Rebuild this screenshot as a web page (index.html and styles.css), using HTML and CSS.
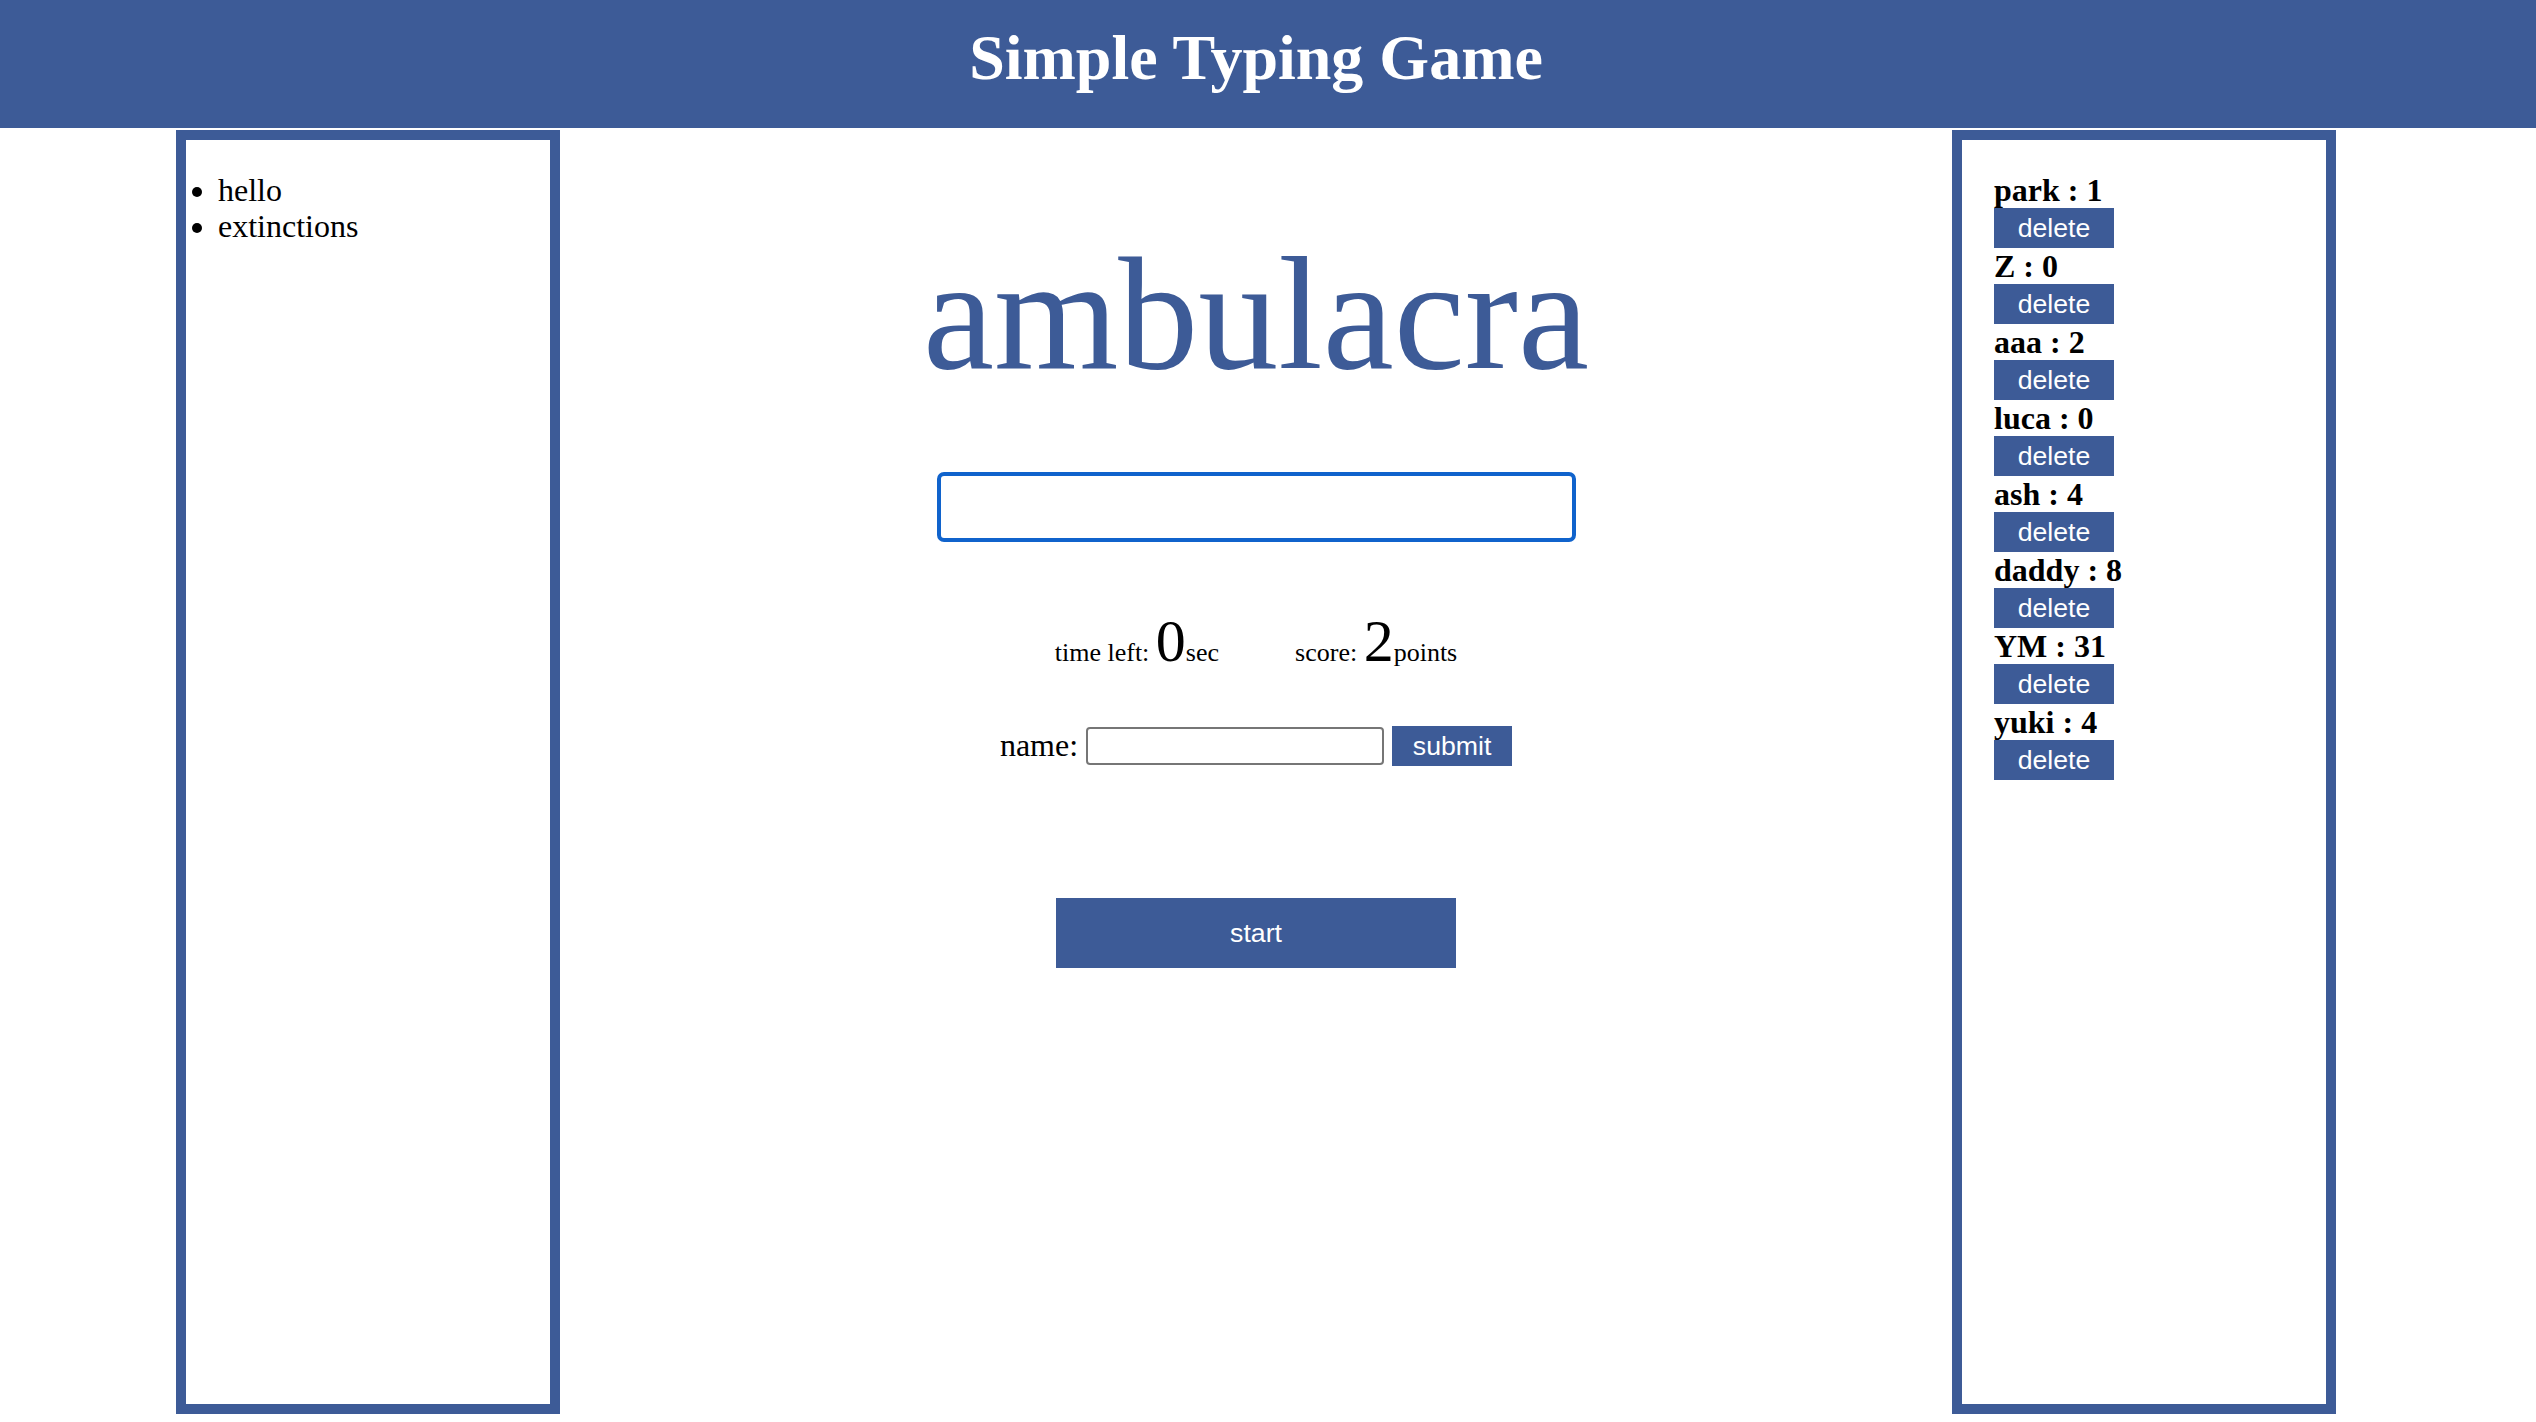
FILE: index.html
```html
<!DOCTYPE html>
<html lang="en">
<head>
<meta charset="utf-8">
<title>Simple Typing Game</title>
<link rel="stylesheet" href="styles.css">
</head>
<body>
<header class="header">
  <h1 class="title">Simple Typing Game</h1>
</header>
<div class="main">
  <aside class="box">
    <ul class="words">
      <li>hello</li>
      <li>extinctions</li>
    </ul>
  </aside>
  <section class="game">
    <div class="word">ambulacra</div>
    <input class="typing" type="text" aria-label="type the word">
    <div class="stats"><span class="stat">time left: <span class="big">0</span>sec</span><span class="stat">score: <span class="big">2</span>points</span></div>
    <div class="name-row">
      <label class="name-label" for="name">name:</label>
      <input class="name-input" id="name" type="text">
      <button class="btn submit">submit</button>
    </div>
    <button class="btn start">start</button>
  </section>
  <aside class="box">
    <ul class="scores">
      <li><div class="entry">park : 1</div><button class="btn del">delete</button></li>
      <li><div class="entry">Z : 0</div><button class="btn del">delete</button></li>
      <li><div class="entry">aaa : 2</div><button class="btn del">delete</button></li>
      <li><div class="entry">luca : 0</div><button class="btn del">delete</button></li>
      <li><div class="entry">ash : 4</div><button class="btn del">delete</button></li>
      <li><div class="entry">daddy : 8</div><button class="btn del">delete</button></li>
      <li><div class="entry">YM : 31</div><button class="btn del">delete</button></li>
      <li><div class="entry">yuki : 4</div><button class="btn del">delete</button></li>
    </ul>
  </aside>
</div>
</body>
</html>
```
FILE: styles.css
```css
html, body {
  margin: 0;
  padding: 0;
  background: #ffffff;
}
body {
  font-family: "Liberation Serif", "Times New Roman", serif;
  color: #000;
  overflow: hidden;
}
.header {
  width: 100%;
  height: 128px;
  box-sizing: border-box;
  padding-top: 21px;
  background: #3d5b97;
  text-align: center;
}
.title {
  margin: 0;
  font-size: 64px;
  line-height: 74px;
  font-weight: bold;
  color: #ffffff;
  padding-right: 24px;
}
.main {
  display: flex;
  justify-content: space-between;
  align-items: flex-start;
  width: 2512px;
  box-sizing: border-box;
  padding: 0 176px;
  margin-top: 2px;
}
.box {
  width: 384px;
  height: 1284px;
  box-sizing: border-box;
  border: 10px solid #3d5b97;
  flex: none;
}
.words {
  margin: 32px 0 0 0;
  padding-left: 32px;
  font-size: 32px;
  line-height: 36px;
}
.scores {
  list-style: none;
  margin: 32px 0 0 0;
  padding-left: 32px;
  font-size: 32px;
  line-height: 36px;
}
.entry {
  font-weight: bold;
  height: 36px;
}
.btn {
  font-family: "Liberation Sans", Arial, Helvetica, sans-serif;
  font-size: 26.67px;
  color: #ffffff;
  background: #3d5b97;
  border: none;
  border-radius: 0;
  padding: 0;
  margin: 0;
  display: block;
}
.del {
  width: 120px;
  height: 40px;
  line-height: 40px;
}
.game {
  flex: 1;
  display: flex;
  flex-direction: column;
  align-items: center;
  padding-top: 92px;
}
.word {
  font-size: 160px;
  line-height: 184px;
  color: #3d5b97;
  white-space: nowrap;
}
.typing {
  margin: 66px 0 0 0;
  width: 639px;
  height: 70px;
  box-sizing: border-box;
  border: 4px solid #1063cc;
  border-radius: 7px;
  outline: none;
  padding: 0 8px;
  font-size: 26px;
  background: #fff;
}
.stats {
  margin-top: 65px;
  font-size: 26px;
  white-space: nowrap;
}
.stat {
  margin: 0 38px;
}
.big {
  font-size: 60px;
}
.name-row {
  margin-top: 50px;
  display: flex;
  align-items: center;
  gap: 8px;
  height: 40px;
}
.name-label {
  font-size: 32px;
  line-height: 36px;
  position: relative;
  top: -1px;
}
.name-input {
  width: 298px;
  height: 38px;
  box-sizing: border-box;
  border: 2px solid #767676;
  border-radius: 4px;
  padding: 2px 4px;
  margin: 0;
  font-size: 26px;
  background: #fff;
}
.submit {
  width: 120px;
  height: 40px;
  line-height: 40px;
}
.start {
  margin-top: 132px;
  width: 400px;
  height: 70px;
  line-height: 70px;
}
```
